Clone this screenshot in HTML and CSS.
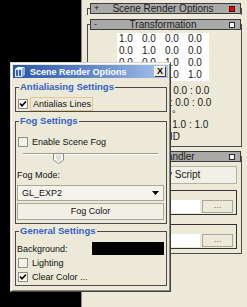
FILE: index.html
```html
<!DOCTYPE html>
<html>
<head>
<meta charset="utf-8">
<link rel="stylesheet" href="styles.css">
</head>
<body>
<div class="screen">
  <div class="void"></div>
  <div class="side">
    <div class="panel collapsed">
      <div class="head"><span class="sign">+</span><span class="htitle">Scene Render Options</span><span class="sq red"></span></div>
    </div>
    <div class="panel transform">
      <div class="head"><span class="sign">-</span><span class="htitle">Transformation</span><span class="sq"></span></div>
      <div class="matrix">
        <span>1.0</span><span>0.0</span><span>0.0</span><span>0.0</span>
        <span>0.0</span><span>1.0</span><span>0.0</span><span>0.0</span>
        <span>0.0</span><span>0.0</span><span>1.0</span><span>0.0</span>
        <span>0.0</span><span>0.0</span><span>0.0</span><span>1.0</span>
      </div>
      <div class="val v1">0.0 : 0.0 : 0.0</div>
      <div class="val v2">0.0 : 0.0 : 0.0</div>
      <div class="val v3">°</div>
      <div class="val v4">1.0 : 1.0 : 1.0</div>
      <div class="val v5">ID</div>
    </div>
    <div class="panel handler">
      <div class="head"><span class="sign">-</span><span class="htitle">Event Handler</span><span class="sq"></span></div>
      <div class="pbtn">Modify Script</div>
      <div class="fgroup"><div class="field"></div><div class="dots">...</div></div>
      <div class="fgroup second"><div class="field"></div><div class="dots">...</div></div>
    </div>
  </div>

  <div class="dialog">
    <div class="titlebar">
      <svg class="ticon" width="10" height="10" viewBox="0 0 10 10">
        <rect x="0" y="2" width="7" height="8" fill="#d8e6fa"/>
        <rect x="1" y="3" width="2" height="6" fill="#3a64b4"/>
        <rect x="4" y="3" width="2" height="6" fill="#3a64b4"/>
        <path d="M0 2 L3 0 H10 L7 2 Z" fill="#ffffff"/>
        <path d="M7 2 L10 0 V8 L7 10 Z" fill="#8fb0e6"/>
      </svg>
      <span class="ttext">Scene Render Options</span>
      <span class="close">X</span>
    </div>

    <div class="group g1">
      <div class="legend">Antialiasing Settings</div>
      <div class="row r-aa">
        <span class="cb checked"><svg width="8" height="8" viewBox="0 0 8 8"><path d="M1 3.5 L3 5.8 L7 1.5" stroke="#000" stroke-width="1.6" fill="none"/></svg></span>
        <span class="focus">Antialias Lines</span>
      </div>
    </div>

    <div class="group g2">
      <div class="legend">Fog Settings</div>
      <div class="row r-fog">
        <span class="cb"></span>
        <span class="lbl">Enable Scene Fog</span>
      </div>
      <div class="slider">
        <div class="track"></div>
        <svg class="thumb" width="11" height="11" viewBox="0 0 11 11">
          <path d="M0.5 0.5 H10.5 V7 L5.5 10.5 L0.5 7 Z" fill="#f7f7f4" stroke="#8c8c88"/>
          <path d="M3 3 H8 M3 5 H8 M4 7 H7" stroke="#c9c9c0" stroke-width="1"/>
        </svg>
      </div>
      <div class="flabel">Fog Mode:</div>
      <div class="combo">
        <span>GL_EXP2</span>
        <svg width="7" height="4" viewBox="0 0 7 4"><path d="M0 0 H7 L3.5 4 Z" fill="#000"/></svg>
      </div>
      <div class="dbtn">Fog Color</div>
    </div>

    <div class="group g3">
      <div class="legend">General Settings</div>
      <div class="row r-bg">
        <span class="flabel2">Background:</span>
        <span class="swatch"></span>
      </div>
      <div class="row r-cb">
        <span class="cb"></span>
        <span class="lbl">Lighting</span>
      </div>
      <div class="row r-cb">
        <span class="cb checked"><svg width="8" height="8" viewBox="0 0 8 8"><path d="M1 3.5 L3 5.8 L7 1.5" stroke="#000" stroke-width="1.6" fill="none"/></svg></span>
        <span class="lbl">Clear Color ...</span>
      </div>
    </div>
  </div>
</div>
</body>
</html>
```

FILE: styles.css
```css
* { box-sizing: border-box; }
html, body { margin: 0; padding: 0; background: #000; }
.screen {
  position: relative;
  display: flex;
  width: 247px;
  height: 307px;
  overflow: hidden;
  background: #000;
  font-family: "Liberation Sans", Arial, sans-serif;
  color: #1a1a1a;
}
.void { width: 81px; flex: none; }
.side {
  flex: 1;
  background: #ece9d8;
  border-left: 1px solid #8c8a80;
  padding: 8px 5px 0 5px;
}
.panel { border: 1px solid #4c4c4c; }
.collapsed { border-bottom: none; padding-bottom: 1px; }
.transform { margin-top: 9px; padding-bottom: 4px; }
.handler { margin-top: 9px; padding-bottom: 4px; }
.head {
  height: 11px;
  margin: -6px 0 0 2px;
  background: #a9a9a7;
  border: 1px solid #3c3c3c;
  display: flex;
  align-items: center;
  font-size: 10px;
  line-height: 9px;
  color: #1e1e1e;
}
.sign { width: 10px; padding-left: 3px; font-size: 9px; }
.htitle { flex: 1; text-align: center; }
.sq {
  width: 6px; height: 6px;
  border: 1px solid #2a2a2a;
  background: #f4f4f4;
  margin: 0 5px 0 4px;
}
.sq.red { background: #e00000; border-color: #600000; }

.matrix {
  margin: 3px 0 0 29px;
  width: 92px;
  display: grid;
  grid-template-columns: repeat(4, 23px);
  grid-auto-rows: 12px;
  font-size: 10px;
  line-height: 12px;
}
.matrix span { background: #fff; padding-left: 2px; }
.val { font-size: 10px; line-height: 12px; white-space: nowrap; }
.v1 { margin-top: 4px; padding-left: 63px; }
.v2 { padding-left: 65px; }
.v3 { padding-left: 84px; height: 10px; line-height: 10px; font-size: 9px; }
.v4 { padding-left: 62px; }
.v5 { padding-left: 82px; height: 11px; line-height: 11px; }

.pbtn {
  margin: 4px 4px 0 18px;
  height: 18px;
  border: 1px solid #b4b2a8;
  background: #f1efe6;
  font-size: 10px;
  line-height: 16px;
  text-align: center;
}
.fgroup {
  margin: 6px 4px 0 4px;
  height: 25px;
  border: 1px solid #333;
  display: flex;
  align-items: flex-start;
  padding: 9px 3px 0 4px;
  gap: 2px;
}
.fgroup.second { margin-top: 9px; }
.field { flex: 1; height: 13px; background: #fff; }
.dots {
  width: 31px; height: 13px;
  border: 1px solid #a9a79c;
  background: #ece9d8;
  font-size: 9px;
  line-height: 9px;
  text-align: center;
  color: #666;
}

/* dialog */
.dialog {
  position: absolute;
  left: 10px;
  top: 62px;
  width: 161px;
  height: 230px;
  background: #ece9d8;
  border: 1px solid;
  border-color: #d8d5c8 #404040 #404040 #d8d5c8;
  box-shadow: inset 1px 1px 0 #fff, inset -1px -1px 0 #8a877c;
  padding: 2px;
  font-size: 9px;
  color: #111;
}
.titlebar {
  height: 13px;
  background: linear-gradient(90deg, #2b55a6 0%, #5a81c6 45%, #a8c4ec 100%);
  display: flex;
  align-items: center;
  color: #fff;
}
.ticon { margin-left: 2px; flex: none; }
.ttext { margin-left: 5px; font-weight: bold; font-size: 9px; white-space: nowrap; }
.close {
  margin-left: auto;
  margin-right: 2px;
  width: 12px;
  height: 11px;
  background: #ece9d8;
  border: 1px solid;
  border-color: #fff #404040 #404040 #fff;
  color: #000;
  font-weight: bold;
  font-size: 9px;
  line-height: 9px;
  text-align: center;
}
.group {
  margin: 0 1px 0 2px;
  border: 1px solid #4a4a4a;
}
.g1 { margin-top: 9px; }
.g2 { margin-top: 9px; padding-bottom: 3px; }
.g3 { margin-top: 7px; padding-bottom: 1px; }
.legend {
  display: table;
  margin: -6px 0 0 3px;
  padding: 0 1px;
  height: 10px;
  line-height: 10px;
  background: #ece9d8;
  color: #3461c8;
  font-weight: bold;
  font-size: 9.5px;
}
.row { display: flex; align-items: center; padding-left: 2px; }
.r-aa { margin-top: 5px; height: 14px; }
.r-fog { margin-top: 9px; height: 14px; }
.r-bg { margin-top: 6px; height: 13px; padding-left: 1px; }
.r-cb { margin-top: 1px; height: 14px; }
.r-cb + .r-cb { margin-top: 0; }
.cb {
  width: 10px; height: 10px;
  border: 1px solid #8e8d86;
  background: #f2f1ea;
  display: flex;
  align-items: center;
  justify-content: center;
  flex: none;
}
.cb.checked { background: #fbfbf8; }
.focus {
  margin-left: 2px;
  border: 1px solid #e3c68c;
  padding: 0 1px 0 2px;
  line-height: 12px;
  height: 14px;
}
.lbl { margin-left: 4px; }
.slider { position: relative; margin-top: 4px; height: 11px; padding-left: 7px; }
.track {
  margin-top: 4px;
  width: 135px;
  height: 2px;
  border-top: 1px solid #9c9a92;
  border-bottom: 1px solid #fff;
}
.thumb { position: absolute; left: 37px; top: 0; }
.flabel { margin: 6px 0 0 1px; line-height: 11px; height: 11px; }
.combo {
  margin: 4px 2px 0 1px;
  height: 16px;
  border: 1px solid #a9a79c;
  background: #f4f3ec;
  display: flex;
  align-items: center;
  justify-content: space-between;
  padding: 0 4px 0 4px;
}
.dbtn {
  margin: 2px 2px 0 1px;
  height: 17px;
  border: 1px solid #a9a79c;
  background: #f1efe6;
  text-align: center;
  line-height: 15px;
}
.flabel2 { flex: 1; }
.swatch { width: 72px; height: 13px; background: #000; margin-right: 2px; }
```
